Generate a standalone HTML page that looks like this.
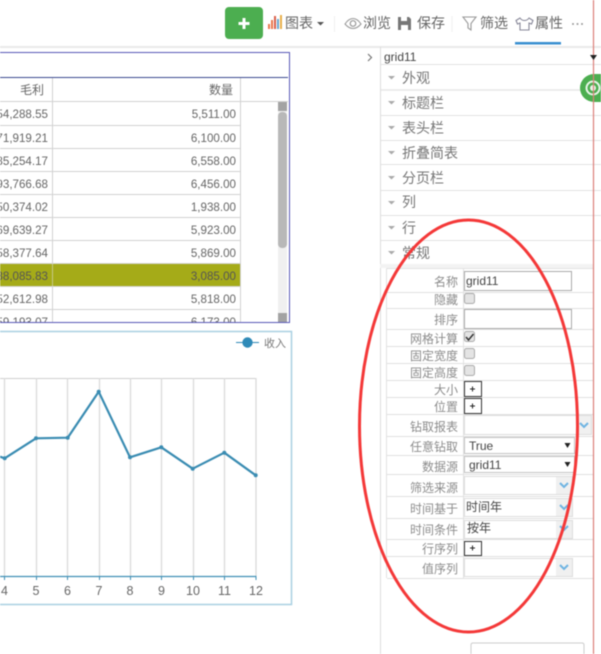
<!DOCTYPE html>
<html><head><meta charset="utf-8">
<style>
html,body{margin:0;padding:0;background:#fff;}
body{width:601px;height:654px;overflow:hidden;position:relative;}
svg{position:absolute;left:0;top:0;filter:blur(.45px);}
text{font-family:"Liberation Sans","Noto Sans CJK SC",sans-serif;}
.tb{font-size:14px;fill:#666;}
.n{font-size:11.6px;fill:#666;text-anchor:end;}
.h{font-size:12px;fill:#666;text-anchor:end;}
.a{font-size:12.5px;fill:#666;text-anchor:middle;}
.s{font-size:14px;fill:#777;}
.l{font-size:12px;fill:#8c8c8c;text-anchor:end;}
.v{font-size:12px;fill:#444;}
</style></head><body>
<svg width="601" height="654" viewBox="0 0 601 654">
<!-- toolbar -->
<rect x="225" y="7" width="38" height="32" rx="4" fill="#4cae50"/>
<path d="M244 18v11M238.500 23.500h11" stroke="#fff" stroke-width="3"/>
<g stroke-width="2">
<path d="M269 29v-5" stroke="#e9784d"/><path d="M272 29v-9" stroke="#e9784d"/><path d="M275 29v-13" stroke="#d9604a"/><path d="M278 29v-10" stroke="#6aa8d0"/><path d="M281 29v-14" stroke="#e8b04a"/>
</g>
<text x="285" y="28" class="tb">图表</text>
<path d="M317 22h7l-3.500 3.500z" fill="#555"/>
<path d="M334.500 16v16" stroke="#f0f0f0"/>
<path d="M345 24c3-4.500 6-5.500 8-5.500s5 1 8 5.500c-3 3.500-6 4.500-8 4.500s-5-1-8-4.500z" fill="none" stroke="#999" stroke-width="1.100"/>
<circle cx="353" cy="23.500" r="2.800" fill="none" stroke="#999" stroke-width="1.200"/>
<text x="363" y="28" class="tb">浏览</text>
<path d="M398 17h11l2 2v11h-13z" fill="#777"/><rect x="401" y="17" width="6" height="4" fill="#fff"/><rect x="401" y="25" width="7" height="5" fill="#fff"/>
<text x="417" y="28" class="tb">保存</text>
<path d="M452 16v16" stroke="#f0f0f0"/>
<path d="M463 17h13l-5 6.500v6.500l-3-2v-4.500z" fill="none" stroke="#999" stroke-width="1.100"/>
<text x="480" y="28" class="tb">筛选</text>
<path d="M520 18l-4 2.500 1.500 3.500 2.500-1v7h9v-7l2.500 1 1.500-3.500-4-2.500c-1 1.500-2 2.500-4.500 2.500s-3.500-1-4.500-2.500z" fill="none" stroke="#889" stroke-width="1.100"/>
<text x="535" y="28" class="tb">属性</text>
<circle cx="573" cy="24" r="1" fill="#999"/><circle cx="577.500" cy="24" r="1" fill="#999"/><circle cx="582" cy="24" r="1" fill="#999"/>
<rect x="515" y="42" width="46" height="2.500" fill="#3a8fd0"/>
<rect x="0" y="46" width="601" height="2" fill="#e9e9e9"/>

<!-- table -->
<path d="M0 52.500H289.500V322.500H0" fill="none" stroke="#5a5ab8" stroke-width="1"/>
<path d="M0 77.500H288" stroke="#3c4a90"/>
<g stroke="#d2d2d2">
<path d="M0 101.500H288M0 125.500H240M0 148.500H240M0 171.500H240M0 194.500H240M0 217.500H240M0 240.500H240M0 263.500H240M0 286.500H240M0 309.500H240"/>
<path d="M52.500 78V322M240.500 78V322"/>
</g>
<rect x="0" y="264" width="240" height="22" fill="#a5ab18"/>
<path d="M52.500 264V286" stroke="#c5c888"/>
<rect x="278" y="102" width="9" height="220" fill="#f0f0f0"/>
<rect x="278" y="102" width="9" height="9" fill="#a3a3a3"/>
<rect x="278" y="112" width="9" height="136" rx="4" fill="#b8b8b8"/>
<rect x="278" y="313" width="9" height="9" fill="#a3a3a3"/>
<text x="44" y="94" class="h">毛利</text><text x="233" y="94" class="h">数量</text>
<g class="nums">
<text x="48" y="118" class="n">54,288.55</text><text x="236" y="118" class="n">5,511.00</text>
<text x="48" y="142" class="n">71,919.21</text><text x="236" y="142" class="n">6,100.00</text>
<text x="48" y="165" class="n">85,254.17</text><text x="236" y="165" class="n">6,558.00</text>
<text x="48" y="188" class="n">93,766.68</text><text x="236" y="188" class="n">6,456.00</text>
<text x="48" y="211" class="n">50,374.02</text><text x="236" y="211" class="n">1,938.00</text>
<text x="48" y="234" class="n">69,639.27</text><text x="236" y="234" class="n">5,923.00</text>
<text x="48" y="257" class="n">58,377.64</text><text x="236" y="257" class="n">5,869.00</text>
<text x="48" y="280" class="n" style="fill:#555">88,085.83</text><text x="236" y="280" class="n" style="fill:#555">3,085.00</text>
<text x="48" y="303" class="n">52,612.98</text><text x="236" y="303" class="n">5,818.00</text>
</g>
<svg x="0" y="310" width="278" height="12" viewBox="0 310 278 12" style="position:static;filter:none">
<text x="48" y="326" class="n">59,193.07</text><text x="236" y="326" class="n">6,173.00</text>
</svg>

<!-- chart -->
<path d="M0 331.500H291.500V604.500H0" fill="none" stroke="#a9d0e2" stroke-width="1.500"/>
<path d="M236 342.500h23" stroke="#2f8ab8" stroke-width="1"/>
<circle cx="247.500" cy="342.500" r="5.200" fill="#2f8ab8"/>
<text x="264" y="347" style="font-size:11px;fill:#777">收入</text>
<path d="M0 378.500H256" stroke="#cfcfcf"/>
<g stroke="#dadada" stroke-width="1.300">
<path d="M4.500 378V576M36.500 378V576M67.500 378V576M99.500 378V576M130.500 378V576M161.500 378V576M193.500 378V576M224.500 378V576M256 378V576"/>
</g>
<path d="M0 576.500H256.500" stroke="#3f8fb5" stroke-width="1.300"/>
<path d="M4.500 577v3M36.500 577v3M67.500 577v3M99.500 577v3M130.500 577v3M161.500 577v3M193.500 577v3M224.500 577v3M256 577v3" stroke="#3f8fb5"/>
<path d="M0 456.700L4.700 458.300L36 438.300L67.700 437.700L98.700 391.700L130 457.300L161.300 447.300L192.700 468.700L224.300 452.700L255.700 475.300" fill="none" stroke="#3a8cb2" stroke-width="2.200" stroke-linejoin="round"/>
<g fill="#3a8cb2"><circle cx="4.700" cy="458.300" r="2"/><circle cx="36" cy="438.300" r="2"/><circle cx="67.700" cy="437.700" r="2"/><circle cx="98.700" cy="391.700" r="2"/><circle cx="130" cy="457.300" r="2"/><circle cx="161.300" cy="447.300" r="2"/><circle cx="192.700" cy="468.700" r="2"/><circle cx="224.300" cy="452.700" r="2"/><circle cx="255.700" cy="475.300" r="2"/></g>
<text x="4.500" y="595" class="a">4</text><text x="36" y="595" class="a">5</text><text x="67.500" y="595" class="a">6</text><text x="99" y="595" class="a">7</text><text x="130" y="595" class="a">8</text><text x="161.500" y="595" class="a">9</text><text x="193" y="595" class="a">10</text><text x="224.500" y="595" class="a">11</text><text x="256" y="595" class="a">12</text>

<!-- right panel -->
<path d="M368 54l3.500 3.500-3.500 3.500" fill="none" stroke="#777" stroke-width="1.200"/>
<path d="M380.500 47V654" stroke="#ddd"/>
<text x="384" y="61" style="font-size:12px;fill:#444">grid11</text>
<g stroke="#e3e3e3" stroke-width="1">
<path d="M381 64.500H601M381 115.500H601M381 140.500H601M381 164.500H601M381 190.500H601M381 215.500H601M381 240.500H601"/>
</g>
<path d="M381 90H601" stroke="#ececec" stroke-width="2"/>
<g fill="#aaa"><path d="M388 76h7l-3.500 3.500z"/><path d="M388 101h7l-3.500 3.500z"/><path d="M388 126h7l-3.500 3.500z"/><path d="M388 151h7l-3.500 3.500z"/><path d="M388 176h7l-3.500 3.500z"/><path d="M388 201h7l-3.500 3.500z"/><path d="M388 226h7l-3.500 3.500z"/><path d="M388 251h7l-3.500 3.500z"/></g>
<text x="402" y="83" class="s">外观</text><text x="402" y="108" class="s">标题栏</text><text x="402" y="133" class="s">表头栏</text><text x="402" y="158" class="s">折叠简表</text><text x="402" y="183" class="s">分页栏</text><text x="402" y="207" class="s">列</text><text x="402" y="233" class="s">行</text><text x="402" y="258" class="s">常规</text>

<!-- property grid -->
<rect x="380" y="264" width="213" height="4" fill="#f3f3f3"/>
<path d="M386.500 268.500H593M386.500 268.500V578M463.500 269V578" stroke="#e2e2e2" fill="none"/>
<g stroke="#e0e0e0"><path d="M387 292.500H593M387 308.500H593M387 329.500H593M387 346.500H593M387 363.500H593M387 380.500H593M387 397.500H593M387 414.500H593M387 436.500H593M387 455.500H593M387 474.500H593M387 496.500H593M387 518.500H593M387 539.500H593M387 556.500H593M387 578.500H593"/></g>
<text x="458" y="286" class="l">名称</text><text x="458" y="304" class="l">隐藏</text><text x="458" y="324" class="l">排序</text><text x="458" y="343" class="l">网格计算</text><text x="458" y="360" class="l">固定宽度</text><text x="458" y="377" class="l">固定高度</text><text x="458" y="394" class="l">大小</text><text x="458" y="411" class="l">位置</text><text x="458" y="431" class="l">钻取报表</text><text x="458" y="451" class="l">任意钻取</text><text x="458" y="471" class="l">数据源</text><text x="458" y="492" class="l">筛选来源</text><text x="458" y="513" class="l">时间基于</text><text x="458" y="534" class="l">时间条件</text><text x="458" y="553" class="l">行序列</text><text x="458" y="573" class="l">值序列</text>

<rect x="464.500" y="271.500" width="107" height="19" fill="#fff" stroke="#aaa"/>
<text x="466" y="285" class="v">grid11</text>
<rect x="464.500" y="309.500" width="107" height="19" fill="#fff" stroke="#aaa"/>
<g fill="#e4e4e4" stroke="#aaa"><rect x="464.500" y="293.500" width="10" height="10" rx="2"/><rect x="464.500" y="331.500" width="10" height="10" rx="2"/><rect x="464.500" y="348.500" width="10" height="10" rx="2"/><rect x="464.500" y="365.500" width="10" height="10" rx="2"/></g>
<path d="M466 337l2.500 3 5-6" fill="none" stroke="#333" stroke-width="1.500"/>
<g fill="#fff" stroke="#333"><rect x="464.500" y="381.500" width="17" height="15"/><rect x="464.500" y="398.500" width="17" height="15"/><rect x="464.500" y="541.500" width="17" height="14"/></g>
<path d="M470 389h5M472.500 386.500v5M470 406h5M472.500 403.500v5M470 548h5M472.500 545.500v5" stroke="#222"/>

<rect x="464.500" y="415.500" width="127" height="19" fill="#fff" stroke="#ddd"/>
<rect x="576" y="416" width="15" height="18" fill="#f0f0f0"/>
<rect x="464.500" y="437.500" width="110" height="16" fill="#fff" stroke="#c4c4c4"/>
<rect x="464.500" y="456.500" width="110" height="16" fill="#fff" stroke="#c4c4c4"/>
<text x="469" y="450" style="font-size:12px;fill:#444">True</text>
<text x="469" y="469" style="font-size:12px;fill:#444">grid11</text>
<path d="M564.500 443h6l-3 5zM564.500 462h6l-3 5z" fill="#222"/>
<g fill="#fff" stroke="#ddd"><rect x="464.500" y="476.500" width="108" height="18"/><rect x="464.500" y="498.500" width="108" height="18"/><rect x="464.500" y="520.500" width="108" height="18"/><rect x="464.500" y="558.500" width="108" height="18"/></g>
<g fill="#f0f0f0"><rect x="556" y="477" width="16" height="17"/><rect x="556" y="499" width="16" height="17"/><rect x="556" y="521" width="16" height="17"/><rect x="556" y="559" width="16" height="17"/></g>
<text x="466" y="511" class="v">时间年</text><text x="467" y="532" class="v">按年</text>
<g fill="none" stroke="#6fb4e2" stroke-width="2"><path d="M580 423l4 4 4-4"/><path d="M560 483l4 4 4-4"/><path d="M560 505l4 4 4-4"/><path d="M560 526l4 4 4-4"/><path d="M560 565l4 4 4-4"/></g>

<!-- bottom box -->
<path d="M471 654V645q0-2 2-2H582q2 0 2 2V654" fill="#fff" stroke="#ccc"/>

<!-- green tab -->
<path d="M601 74H594a14 14 0 0 0 0 28H601z" fill="#4cae50"/>
<circle cx="593" cy="88" r="6.500" fill="none" stroke="#e8f5e8" stroke-width="2"/>
<circle cx="593" cy="88" r="3" fill="#e8f5e8"/>

<!-- red vertical -->
<path d="M593.500 0V654" stroke="#dc7f7a" stroke-width="1.200"/>
<path d="M590 55h7l-3.500 5z" fill="#222"/>

<!-- red ellipse -->
<ellipse cx="468.500" cy="426" rx="109" ry="206" fill="none" stroke="#f43838" stroke-width="3"/>
</svg>
</body></html>
